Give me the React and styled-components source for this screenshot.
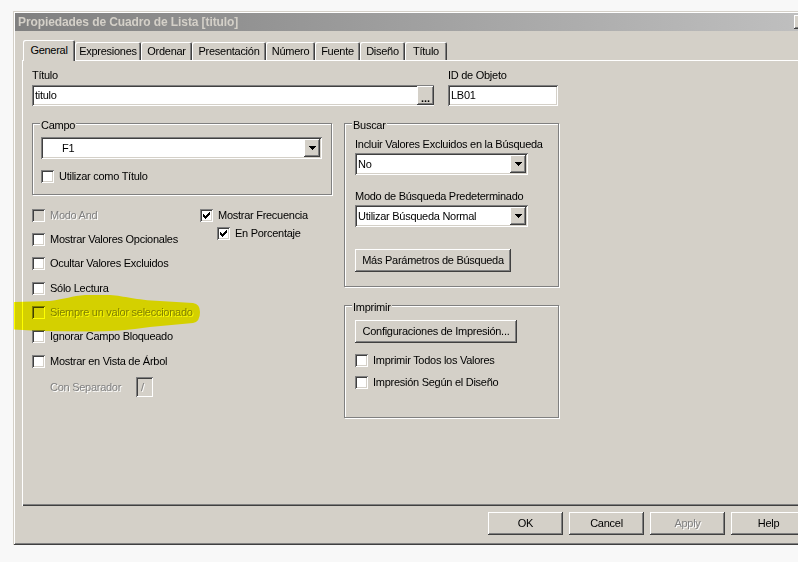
import React from 'react';
import styled, { createGlobalStyle, css } from 'styled-components';

const GlobalStyle = createGlobalStyle`
  html, body { margin: 0; padding: 0; background: #f8f8f8; }
  body {
    font-family: "Liberation Sans", Arial, sans-serif;
    font-size: 11px;
    letter-spacing: -0.27px;
    color: #000;
  }
  * { box-sizing: border-box; }
`;

const sunken = css`
  box-shadow: inset 1px 1px #808080, inset -1px -1px #ffffff,
    inset 2px 2px #404040, inset -2px -2px #d4d0c8;
`;
const raised = css`
  box-shadow: inset -1px -1px #404040, inset 1px 1px #ffffff,
    inset -2px -2px #808080, inset 2px 2px #d4d0c8;
`;
const disabledText = css`
  color: #808080;
  text-shadow: 1px 1px 0 #ffffff;
`;

const Page = styled.div`
  position: relative;
  width: 798px;
  height: 562px;
  overflow: hidden;
  padding: 11px 0 0 13px;
`;

const Window = styled.div`
  width: 801px;
  height: 534px;
  padding: 2px;
  background: #d4d0c8;
  box-shadow: inset 1px 1px #d4d0c8, inset -1px -1px #404040,
    inset 2px 2px #ffffff, inset -2px -2px #808080;
  display: flex;
  flex-direction: column;
`;

const TitleBar = styled.div`
  height: 18px;
  flex: none;
  display: flex;
  align-items: center;
  padding-left: 3px;
  background: linear-gradient(to right, #808080, #c0c0c0);
`;

const TitleText = styled.span`
  font-weight: bold;
  font-size: 12px;
  color: #d4d0c8;
  letter-spacing: -0.1px;
  line-height: 14px;
`;

const TitleButton = styled.div`
  width: 16px;
  height: 14px;
  margin-left: auto;
  margin-right: 2px;
  background: #d4d0c8;
  ${raised}
`;

const Client = styled.div`
  flex: 1;
  display: flex;
  flex-direction: column;
  padding: 9px 6px 8px 7px;
`;

const TabStrip = styled.div`
  height: 20px;
  flex: none;
  display: flex;
  align-items: flex-end;
  padding-left: 1px;
`;

const Tab = styled.div`
  position: relative;
  width: ${(p) => p.$w}px;
  height: ${(p) => (p.$active ? 21 : 18)}px;
  margin-bottom: ${(p) => (p.$active ? -1 : 0)}px;
  z-index: ${(p) => (p.$active ? 1 : 0)};
  display: flex;
  align-items: center;
  justify-content: center;
  line-height: 13px;
  padding-bottom: ${(p) => (p.$active ? 1 : 0)}px;
  background: #d4d0c8;
  border-radius: 2px 2px 0 0;
  box-shadow: inset 1px 1px #ffffff, inset -1px 0 #404040, inset -2px 0 #808080;
`;

const Panel = styled.div`
  height: 446px;
  flex: none;
  padding: 9px 0 0 10px;
  box-shadow: inset 1px 1px #ffffff, inset -1px -1px #404040,
    inset -2px -2px #808080;
`;

const TopRow = styled.div`
  display: flex;
  gap: 14px;
`;

const Field = styled.div`
  width: ${(p) => p.$w}px;
  display: flex;
  flex-direction: column;
`;

const Label = styled.div`
  line-height: 13px;
  height: 13px;
  margin-top: ${(p) => p.$mt || 0}px;
  margin-bottom: ${(p) => p.$mb ?? 3}px;
  white-space: nowrap;
`;

const TextBox = styled.div`
  height: 21px;
  display: flex;
  align-items: center;
  background: #ffffff;
  padding: 0 0 0 3px;
  ${sunken}
`;

const FieldText = styled.span`
  flex: 1;
  line-height: 13px;
  white-space: nowrap;
`;

const EllipsisButton = styled.div`
  width: 17px;
  align-self: stretch;
  margin: 1px 0;
  display: flex;
  align-items: flex-end;
  justify-content: center;
  padding-bottom: 3px;
  font-weight: bold;
  line-height: 8px;
  letter-spacing: 0;
  background: #d4d0c8;
  ${raised}
`;

const MainRow = styled.div`
  display: flex;
  gap: 12px;
  margin-top: 17px;
`;

const Column = styled.div`
  width: ${(p) => p.$w}px;
  display: flex;
  flex-direction: column;
`;

const GroupBox = styled.div`
  position: relative;
  height: ${(p) => p.$h}px;
  margin-top: ${(p) => p.$mt || 0}px;
  padding: ${(p) => p.$pt}px 0 0 ${(p) => p.$pl}px;
  padding-right: ${(p) => p.$pr || 0}px;
  border: 1px solid #808080;
  box-shadow: inset 1px 1px #ffffff, 1px 1px 0 #ffffff;
`;

const GroupTitle = styled.span`
  position: absolute;
  top: -5px;
  left: 7px;
  padding: 0 1px;
  line-height: 13px;
  background: #d4d0c8;
`;

const Combo = styled.div`
  width: ${(p) => (p.$w ? `${p.$w}px` : '100%')};
  height: 22px;
  display: flex;
  align-items: stretch;
  background: #ffffff;
  ${sunken}
`;

const ComboText = styled.span`
  flex: 1;
  display: flex;
  align-items: center;
  padding-left: ${(p) => p.$pad}px;
  line-height: 13px;
  white-space: nowrap;
`;

const ComboButton = styled.div`
  width: 16px;
  margin: 2px 2px 2px 0;
  display: flex;
  align-items: center;
  justify-content: center;
  background: #d4d0c8;
  ${raised}
`;

const Arrow = () => (
  <svg width="7" height="4" viewBox="0 0 7 4" shapeRendering="crispEdges">
    <path d="M0 0h7v1H0z M1 1h5v1H1z M2 2h3v1H2z M3 3h1v1H3z" fill="#000" />
  </svg>
);

const CheckRow = styled.div`
  display: flex;
  align-items: center;
  margin-top: ${(p) => p.$mt || 0}px;
  margin-left: ${(p) => p.$indent || 0}px;
  line-height: 13px;
  white-space: nowrap;
  ${(p) => p.$disabled && disabledText}
`;

const Box = styled.span`
  width: 13px;
  height: 13px;
  flex: none;
  margin-right: 5px;
  background: ${(p) => (p.$disabled ? '#d4d0c8' : '#ffffff')};
  text-shadow: none;
  ${sunken}
  svg { display: block; }
`;

const Check = ({ checked, disabled }) => (
  <Box $disabled={disabled}>
    {checked && (
      <svg width="13" height="13" viewBox="0 0 13 13" shapeRendering="crispEdges">
        <path
          d="M3 5h1v3H3z M4 6h1v3H4z M5 7h1v3H5z M6 6h1v3H6z M7 5h1v3H7z M8 4h1v3H8z M9 3h1v3H9z"
          fill="#000"
        />
      </svg>
    )}
  </Box>
);

const Options = styled.div`
  display: flex;
  margin-top: 8px;
`;

const OptionList = styled.div`
  width: 168px;
  display: grid;
  grid-template-rows: repeat(7, 24.35px) auto;
`;

const SideList = styled.div`
  display: grid;
  grid-auto-rows: 18px;
  align-content: start;
  padding-top: 3px;
`;

const SepRow = styled.div`
  display: flex;
  align-items: center;
  height: 24px;
  margin-top: 2px;
  padding-left: 18px;
`;

const SepLabel = styled.span`
  width: 86px;
  line-height: 13px;
  white-space: nowrap;
  ${disabledText}
`;

const SmallBox = styled.div`
  width: 17px;
  height: 20px;
  display: flex;
  align-items: center;
  padding-left: 5px;
  background: #d4d0c8;
  line-height: 13px;
  ${sunken}
  ${disabledText}
`;

const PushButton = styled.button`
  width: ${(p) => p.$w || 75}px;
  height: 23px;
  margin-top: ${(p) => p.$mt || 0}px;
  padding: 0;
  border: none;
  background: #d4d0c8;
  font: inherit;
  letter-spacing: inherit;
  line-height: 13px;
  color: #000;
  white-space: nowrap;
  ${raised}
  &:disabled {
    ${disabledText}
  }
`;

const ButtonBar = styled.div`
  display: flex;
  justify-content: flex-end;
  gap: 6px;
  margin-top: 6px;
`;

const Highlight = styled.svg`
  position: absolute;
  left: 0;
  top: 0;
  pointer-events: none;
  mix-blend-mode: multiply;
`;

const tabs = [
  ['General', 52],
  ['Expresiones', 66],
  ['Ordenar', 51],
  ['Presentación', 74],
  ['Número', 49],
  ['Fuente', 45],
  ['Diseño', 45],
  ['Título', 42],
];

const leftOptions = [
  ['Modo And', true],
  ['Mostrar Valores Opcionales', false],
  ['Ocultar Valores Excluidos', false],
  ['Sólo Lectura', false],
  ['Siempre un valor seleccionado', true],
  ['Ignorar Campo Bloqueado', false],
  ['Mostrar en Vista de Árbol', false],
];

export default function App() {
  return (
    <>
      <GlobalStyle />
      <Page>
        <Window>
          <TitleBar>
            <TitleText>Propiedades de Cuadro de Lista [titulo]</TitleText>
            <TitleButton />
          </TitleBar>
          <Client>
            <TabStrip>
              {tabs.map(([name, w], i) => (
                <Tab key={name} $w={w} $active={i === 0}>
                  {name}
                </Tab>
              ))}
            </TabStrip>
            <Panel>
              <TopRow>
                <Field $w={402}>
                  <Label>Título</Label>
                  <TextBox>
                    <FieldText>titulo</FieldText>
                    <EllipsisButton>...</EllipsisButton>
                  </TextBox>
                </Field>
                <Field $w={110}>
                  <Label>ID de Objeto</Label>
                  <TextBox>
                    <FieldText>LB01</FieldText>
                  </TextBox>
                </Field>
              </TopRow>
              <MainRow>
                <Column $w={300}>
                  <GroupBox $h={72} $pt={13} $pl={8} $pr={9}>
                    <GroupTitle>Campo</GroupTitle>
                    <Combo>
                      <ComboText $pad={21}>F1</ComboText>
                      <ComboButton>
                        <Arrow />
                      </ComboButton>
                    </Combo>
                    <CheckRow $mt={11}>
                      <Check />
                      Utilizar como Título
                    </CheckRow>
                  </GroupBox>
                  <Options>
                    <OptionList>
                      {leftOptions.map(([label, disabled]) => (
                        <CheckRow key={label} $disabled={disabled}>
                          <Check disabled={disabled} />
                          {label}
                        </CheckRow>
                      ))}
                      <SepRow>
                        <SepLabel>Con Separador</SepLabel>
                        <SmallBox>/</SmallBox>
                      </SepRow>
                    </OptionList>
                    <SideList>
                      <CheckRow>
                        <Check checked />
                        Mostrar Frecuencia
                      </CheckRow>
                      <CheckRow $indent={17}>
                        <Check checked />
                        En Porcentaje
                      </CheckRow>
                    </SideList>
                  </Options>
                </Column>
                <Column $w={215}>
                  <GroupBox $h={164} $pt={14} $pl={10}>
                    <GroupTitle>Buscar</GroupTitle>
                    <Label $mb={2}>Incluir Valores Excluidos en la Búsqueda</Label>
                    <Combo $w={173}>
                      <ComboText $pad={3}>No</ComboText>
                      <ComboButton>
                        <Arrow />
                      </ComboButton>
                    </Combo>
                    <Label $mt={15} $mb={2}>
                      Modo de Búsqueda Predeterminado
                    </Label>
                    <Combo $w={173}>
                      <ComboText $pad={3}>Utilizar Búsqueda Normal</ComboText>
                      <ComboButton>
                        <Arrow />
                      </ComboButton>
                    </Combo>
                    <PushButton $w={156} $mt={22}>
                      Más Parámetros de Búsqueda
                    </PushButton>
                  </GroupBox>
                  <GroupBox $h={113} $mt={18} $pt={14} $pl={10}>
                    <GroupTitle>Imprimir</GroupTitle>
                    <PushButton $w={162}>Configuraciones de Impresión...</PushButton>
                    <CheckRow $mt={11}>
                      <Check />
                      Imprimir Todos los Valores
                    </CheckRow>
                    <CheckRow $mt={9}>
                      <Check />
                      Impresión Según el Diseño
                    </CheckRow>
                  </GroupBox>
                </Column>
              </MainRow>
            </Panel>
            <ButtonBar>
              <PushButton>OK</PushButton>
              <PushButton>Cancel</PushButton>
              <PushButton disabled>Apply</PushButton>
              <PushButton>Help</PushButton>
            </ButtonBar>
          </Client>
        </Window>
        <Highlight width="798" height="562" viewBox="0 0 798 562">
          <path
            d="M14 302 L50 301 C65 299 72 296 85 295 L110 295 C125 296 135 300 160 301 L193 303 Q200 304 200 312 Q200 322 193 323 L150 327 C130 330 110 331.5 90 331.5 L40 331 L14 329.5 Z"
            fill="#ffff00"
          />
        </Highlight>
      </Page>
    </>
  );
}
